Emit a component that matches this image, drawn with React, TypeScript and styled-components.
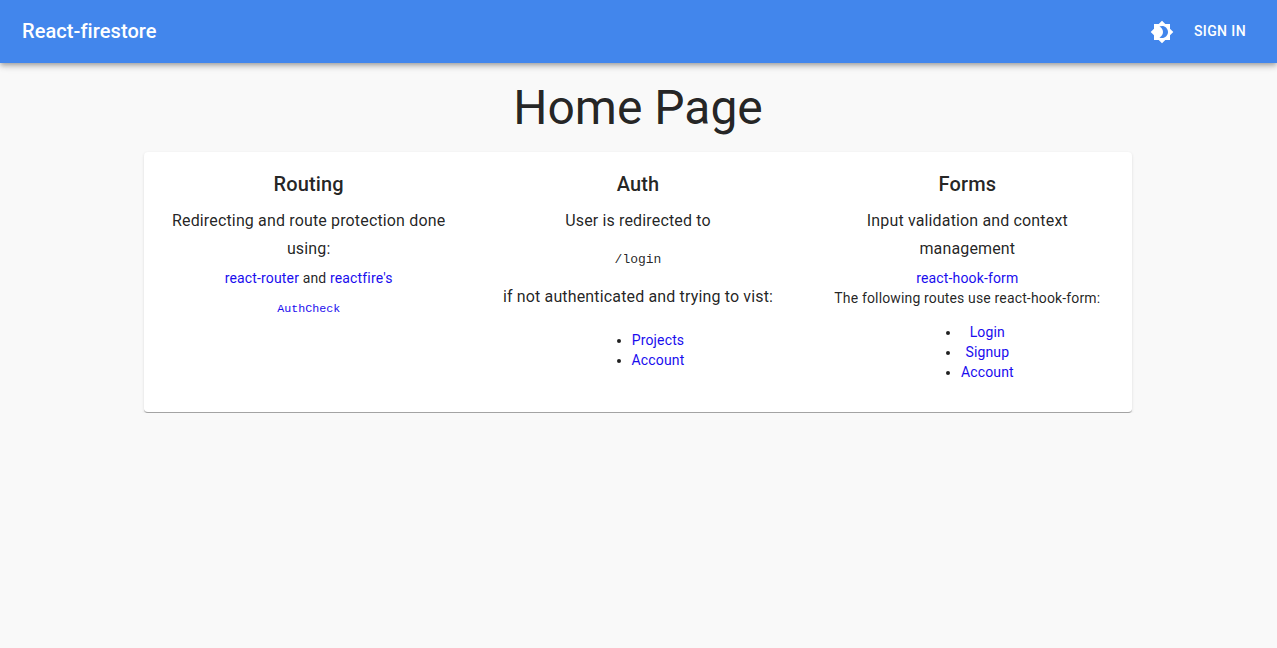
import React from "react";
import styled, { createGlobalStyle } from "styled-components";

const GlobalStyle = createGlobalStyle`
  body {
    margin: 0;
    background: #f9f9f9;
    color: rgba(0, 0, 0, 0.87);
    font-family: Roboto, "Liberation Sans", sans-serif;
  }
`;

const Bar = styled.header`
  display: flex;
  align-items: center;
  justify-content: space-between;
  height: 63px;
  padding: 0 23px 0 22px;
  background: #4286ec;
  color: #fff;
  box-shadow: 0 2px 4px -1px rgba(0, 0, 0, 0.2), 0 4px 5px 0 rgba(0, 0, 0, 0.14), 0 1px 10px 0 rgba(0, 0, 0, 0.12);
`;

const Brand = styled.div`
  padding-bottom: 1px;
  font-size: 20px;
  font-weight: 500;
  line-height: 1.6;
  letter-spacing: 0.08px;
`;

const BarActions = styled.div`
  display: flex;
  align-items: center;
  gap: 12px;
`;

const ThemeIcon = styled.svg`
  width: 24px;
  height: 24px;
  fill: #fff;
  display: block;
`;

const SignIn = styled.span`
  padding: 6px 8px;
  font-size: 14px;
  font-weight: 500;
  line-height: 1.75;
  letter-spacing: 0.4px;
  text-transform: uppercase;
`;

const Title = styled.h1`
  margin: 0;
  padding: 9px 1px 0 0;
  font-size: 48px;
  font-weight: 400;
  line-height: 72px;
  text-align: center;
`;

const Card = styled.section`
  display: grid;
  grid-template-columns: repeat(3, 1fr);
  width: 988px;
  height: 261px;
  margin: 8px 145px 0 144px;
  box-sizing: border-box;
  background: #fff;
  border-radius: 4px;
  border-bottom: 1px solid #a3a3a3;
  box-shadow: 0 1px 3px 0 rgba(0, 0, 0, 0.12);
`;

const Column = styled.div`
  padding: 16px 16px 0;
  text-align: center;
`;

const Heading = styled.h2`
  margin: 0 0 7px;
  font-size: 20px;
  font-weight: 500;
  line-height: 32px;
  letter-spacing: 0.15px;
`;

const Lead = styled.p`
  margin: 0;
  font-size: 16px;
  line-height: 28px;
  letter-spacing: 0.15px;
`;

const Small = styled.div`
  font-size: 14px;
  line-height: 20px;
  letter-spacing: 0.15px;
`;

const LinkLine = styled(Small)`
  margin-top: 5px;
`;

const Link = styled.a`
  color: #1a0dee;
  text-decoration: none;
`;

const Code = styled.code<{ $size: number; $before: number; $after: number }>`
  display: block;
  font-family: "Liberation Mono", monospace;
  font-size: ${(p) => p.$size}px;
  line-height: 20px;
  margin: ${(p) => p.$before}px 0 ${(p) => p.$after}px;
`;

const Routes = styled.ul<{ $gap: number }>`
  display: inline-block;
  margin: ${(p) => p.$gap}px 0 0;
  padding-left: 40px;
  font-size: 14px;
  line-height: 20px;
  letter-spacing: 0.15px;
  text-align: center;
`;

export default function App() {
  return (
    <>
      <GlobalStyle />
      <Bar>
        <Brand>React-firestore</Brand>
        <BarActions>
          <ThemeIcon viewBox="0 0 24 24">
            <path d="M20 8.69V4h-4.69L12 .69 8.69 4H4v4.69L.69 12 4 15.31V20h4.69L12 23.31 15.31 20H20v-4.69L23.31 12 20 8.69zM12 18c-.89 0-1.74-.2-2.5-.55C11.56 16.5 13 14.42 13 12s-1.44-4.5-3.5-5.45C10.26 6.2 11.11 6 12 6c3.31 0 6 2.69 6 6s-2.69 6-6 6z" />
          </ThemeIcon>
          <SignIn>Sign in</SignIn>
        </BarActions>
      </Bar>
      <main>
        <Title>Home Page</Title>
        <Card>
          <Column>
            <Heading>Routing</Heading>
            <Lead>Redirecting and route protection done using:</Lead>
            <LinkLine>
              <Link href="#">react-router</Link> and <Link href="#">reactfire's</Link>
            </LinkLine>
            <Link href="#">
              <Code $size={11.67} $before={11} $after={11}>AuthCheck</Code>
            </Link>
          </Column>
          <Column>
            <Heading>Auth</Heading>
            <Lead>User is redirected to</Lead>
            <Code $size={13} $before={15} $after={13}>/login</Code>
            <Lead>if not authenticated and trying to vist:</Lead>
            <Routes $gap={19}>
              <li><Link href="#">Projects</Link></li>
              <li><Link href="#">Account</Link></li>
            </Routes>
          </Column>
          <Column>
            <Heading>Forms</Heading>
            <Lead>Input validation and context management</Lead>
            <LinkLine>
              <Link href="#">react-hook-form</Link>
            </LinkLine>
            <Small>The following routes use react-hook-form:</Small>
            <Routes $gap={14}>
              <li><Link href="#">Login</Link></li>
              <li><Link href="#">Signup</Link></li>
              <li><Link href="#">Account</Link></li>
            </Routes>
          </Column>
        </Card>
      </main>
    </>
  );
}
